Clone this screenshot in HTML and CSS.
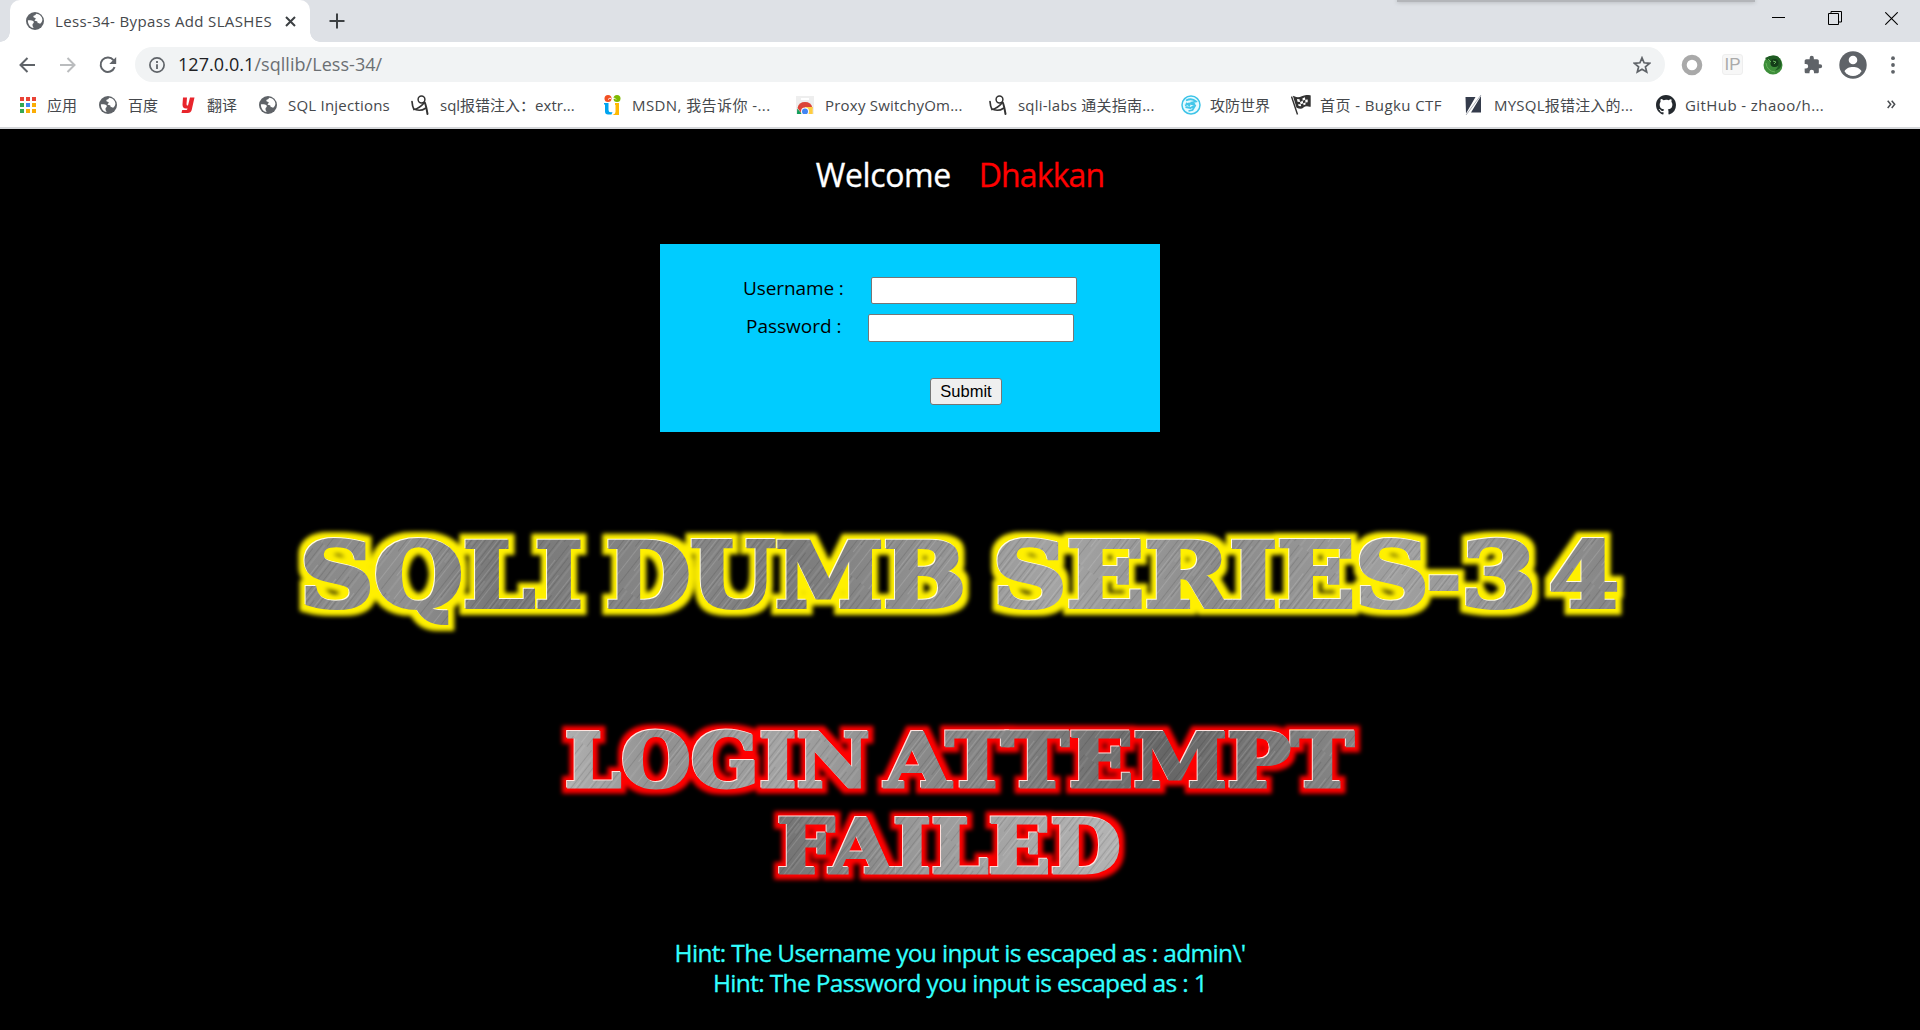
FILE: index.html
```html
<!DOCTYPE html>
<html lang="zh-CN">
<head>
<meta charset="utf-8">
<title>Less-34- Bypass Add SLASHES</title>
<link rel="stylesheet" href="styles.css">
</head>
<body>
<svg class="defs" width="0" height="0" aria-hidden="true">
  <defs>
    <symbol id="globe" viewBox="0 0 18 18">
      <circle cx="9" cy="9" r="9" fill="#5f6368"/>
      <path d="M10 1.800c-.3 1.500-1.300 1.900-2.400 2-.5 1-.2 1.800 1 1.900 1.600.1 1.300 1.500.3 2.100-.8.500-.2 1.300.9 1.200 1.700 0 2.100 1 1.700 2 .9.300 1.900.2 2.600.8 1.300-1 2.300-2.300 2.300-4.200C16.200 4.500 13.400 2 10 1.800zM1.900 8.200c1.600.1 3.800-.1 5.200.9 1 .7.900 1.900 0 2.500-.8.500-.5 1.400-.5 2.400.1.900 1 1.300.9 2.100C4.200 15.300 1.700 12.300 1.900 8.200z" fill="#fff"/>
    </symbol>
    <symbol id="figure" viewBox="0 0 18 20">
      <g fill="none" stroke="#333" stroke-linecap="round"><circle cx="10.500" cy="4.500" r="3.400" stroke-width="1.500"/><path d="M1 6.500c.2 3 .8 6 2 8 3-.7 7-3 10-6.500M5 14.800c3 .8 7 .2 9.500-1.600" stroke-width="1.700"/><path d="M13.800 7.500c1.200 3 2 7 2.700 11.500" stroke-width="2"/></g>
    </symbol>
    <pattern id="brush" width="23" height="150" patternUnits="userSpaceOnUse" patternTransform="rotate(38)">
      <path d="M1 0v90M6.500 30v120M11 0v60M17.500 20v110M21 80v70" stroke="#fff" stroke-opacity=".14"/>
      <path d="M3.500 10v100M8.500 0v70M13.500 50v100M19.500 0v120" stroke="#000" stroke-opacity=".11"/>
    </pattern>
    <linearGradient id="steel" gradientUnits="userSpaceOnUse" x1="0" y1="0" x2="1330" y2="180">
      <stop offset="0" stop-color="#858585"/><stop offset=".1" stop-color="#909090"/><stop offset=".17" stop-color="#777"/><stop offset=".3" stop-color="#888"/><stop offset=".38" stop-color="#7a7a7a"/><stop offset=".46" stop-color="#8c8c8c"/><stop offset=".58" stop-color="#a4a4a4"/><stop offset=".7" stop-color="#8b8b8b"/><stop offset=".83" stop-color="#a0a0a0"/><stop offset="1" stop-color="#858585"/>
    </linearGradient>
    <linearGradient id="steel2" gradientUnits="userSpaceOnUse" x1="0" y1="40" x2="800" y2="0">
      <stop offset="0" stop-color="#b8b8b8"/><stop offset=".15" stop-color="#909090"/><stop offset=".3" stop-color="#a4a4a4"/><stop offset=".46" stop-color="#8a8a8a"/><stop offset=".57" stop-color="#858585"/><stop offset=".78" stop-color="#666"/><stop offset="1" stop-color="#858585"/>
    </linearGradient>
    <linearGradient id="steel3" gradientUnits="userSpaceOnUse" x1="220" y1="0" x2="570" y2="0">
      <stop offset="0" stop-color="#6d6d6d"/><stop offset=".45" stop-color="#999"/><stop offset="1" stop-color="#b2b2b2"/>
    </linearGradient>
    <pattern id="metalSeries" width="1360" height="150" patternUnits="userSpaceOnUse"><rect width="1360" height="150" fill="url(#steel)"/><rect width="1360" height="150" fill="url(#brush)"/></pattern>
    <pattern id="metalLogin" width="840" height="190" patternUnits="userSpaceOnUse"><rect width="840" height="98" fill="url(#steel2)"/><rect y="98" width="840" height="92" fill="url(#steel3)"/><rect width="840" height="190" fill="url(#brush)"/></pattern>
    <filter id="yellowGlow" filterUnits="userSpaceOnUse" x="0" y="0" width="1360" height="150" color-interpolation-filters="sRGB">
      <feMorphology in="SourceAlpha" operator="dilate" radius="6"/><feGaussianBlur stdDeviation="2.200" result="g"/>
      <feFlood flood-color="#fff000"/><feComposite in2="g" operator="in" result="glow"/>
      <feOffset in="SourceAlpha" dx="-1" dy="-1" result="o"/><feFlood flood-color="#fffbe0"/><feComposite in2="o" operator="in" result="edge"/>
      <feMerge><feMergeNode in="glow"/><feMergeNode in="edge"/><feMergeNode in="SourceGraphic"/></feMerge>
    </filter>
    <filter id="redGlow" filterUnits="userSpaceOnUse" x="0" y="0" width="840" height="190" color-interpolation-filters="sRGB">
      <feMorphology in="SourceAlpha" operator="dilate" radius="5"/><feGaussianBlur stdDeviation="2" result="g"/>
      <feFlood flood-color="#ff0000"/><feComposite in2="g" operator="in" result="glow"/>
      <feOffset in="SourceAlpha" dx="-1" dy="-1" result="o"/><feFlood flood-color="#ffe4e0"/><feComposite in2="o" operator="in" result="edge"/>
      <feMerge><feMergeNode in="glow"/><feMergeNode in="edge"/><feMergeNode in="SourceGraphic"/></feMerge>
    </filter>
  </defs>
</svg>

<header class="browser">
  <div class="tabstrip">
    <div class="tab">
      <svg width="18" height="18"><use href="#globe"/></svg>
      <span class="tab-title">Less-34- Bypass Add SLASHES</span>
      <svg width="11" height="11" viewBox="0 0 11 11"><path d="M1 1l9 9M10 1l-9 9" stroke="#3c4043" stroke-width="2"/></svg>
    </div>
    <svg class="new-tab" width="16" height="16" viewBox="0 0 16 16"><path d="M8 .5v15M.5 8h15" stroke="#3c4043" stroke-width="2"/></svg>
    <div class="window-buttons">
      <svg width="13" height="13" viewBox="0 0 13 13"><path d="M0 5.500h13" stroke="#000"/></svg>
      <svg width="14" height="14" viewBox="0 0 14 14"><path d="M.5 2.500h10v11H.5zM3 2.500v-2h10.500v10.500H11" fill="none" stroke="#000"/></svg>
      <svg width="13" height="13" viewBox="0 0 13 13"><path d="M.3.300l12.400 12.400M12.700.3L.3 12.700" stroke="#000" stroke-width="1.100"/></svg>
    </div>
    <div class="behind-window"></div>
  </div>

  <div class="toolbar">
    <svg width="16" height="16" viewBox="0 0 16 16"><path d="M16 8H1.500M8.500 1L1.500 8l7 7" fill="none" stroke="#5f6368" stroke-width="2"/></svg>
    <svg width="16" height="16" viewBox="0 0 16 16"><path d="M0 8h14.500M7.500 1l7 7-7 7" fill="none" stroke="#babcbe" stroke-width="2"/></svg>
    <svg width="18" height="18" viewBox="0 0 18 18"><path d="M15.600 11.200A7.200 7.200 0 1 1 14.500 4.200" fill="none" stroke="#5f6368" stroke-width="2"/><path d="M17.200 1v6.900h-6.900z" fill="#5f6368"/></svg>
    <div class="omnibox">
      <svg width="16" height="16" viewBox="0 0 16 16"><circle cx="8" cy="8" r="7.100" fill="none" stroke="#5f6368" stroke-width="1.700"/><path d="M8 7.200V12M8 4v1.900" stroke="#5f6368" stroke-width="1.800"/></svg>
      <span class="url"><b>127.0.0.1</b>/sqllib/Less-34/</span>
      <svg class="star" width="18" height="18" viewBox="0 0 18 18"><path d="M9 1.800l2.100 5 5.400.5-4.100 3.500 1.300 5.300L9 13.300l-4.700 2.800 1.300-5.300-4.100-3.500 5.400-.5z" fill="none" stroke="#5f6368" stroke-width="1.700"/></svg>
    </div>
    <div class="extensions">
      <svg width="22" height="22" viewBox="0 0 22 22"><circle cx="11" cy="11" r="7.800" fill="none" stroke="#a9a9a9" stroke-width="5"/></svg>
      <div class="ip">IP</div>
      <svg width="20" height="20" viewBox="0 0 20 20"><circle cx="10" cy="10" r="9.500" fill="#3d8e3a"/><path d="M2 3q8-4 13-1.500 5 5 3 10-2 4-6 4 3-2 3-5-2 2-5 1-4-2-1-5-5-1-7-3.500z" fill="#205b23"/><circle cx="11.500" cy="8" r="4" fill="#143c19"/><path d="M3 8q1 8 9 9M10 6l3 1-2 2M5 4l3 3" stroke="#66b35b" fill="none"/></svg>
      <svg width="20" height="20" viewBox="0 0 24 24"><path d="M20.500 11H19V7c0-1.100-.9-2-2-2h-4V3.500a2.500 2.500 0 0 0-5 0V5H4c-1.100 0-2 .9-2 2v3.800h1.500a2.700 2.700 0 0 1 0 5.400H2V20c0 1.100.9 2 2 2h3.800v-1.500a2.700 2.700 0 0 1 5.400 0V22H17c1.100 0 2-.9 2-2v-4h1.500a2.500 2.500 0 0 0 0-5z" fill="#5f6368"/></svg>
      <svg width="28" height="28" viewBox="0 0 28 28"><circle cx="14" cy="14" r="13.700" fill="#5f6368"/><circle cx="14" cy="9" r="4.300" fill="#fff"/><path d="M5.500 20.200C8 14.500 20 14.500 22.500 20.200a10 10 0 0 1-17 0z" fill="#fff"/></svg>
      <svg width="4" height="18" viewBox="0 0 4 18"><g fill="#5f6368"><circle cx="2" cy="2.200" r="1.900"/><circle cx="2" cy="9" r="1.900"/><circle cx="2" cy="15.800" r="1.900"/></g></svg>
    </div>
  </div>

  <nav class="bookmarks">
    <a class="bm"><svg width="18" height="18" viewBox="0 0 18 18"><path d="M1 1h4v4H1zM7 1h4v4H7zM13 1h4v4h-4z" fill="#ea4335"/><path d="M1 7h4v4H1zM1 13h4v4H1z" fill="#34a853"/><path d="M7 7h4v4H7z" fill="#4285f4"/><path d="M13 7h4v4h-4zM7 13h4v4H7zM13 13h4v4h-4z" fill="#fbad05"/></svg><span>应用</span></a>
    <a class="bm"><svg width="18" height="18"><use href="#globe"/></svg><span>百度</span></a>
    <a class="bm translate"><svg width="16" height="18" viewBox="0 0 16 18"><path d="M2 1.500h4L5.500 8q0 2 1.500 1.500L9 1.500h4.500L10.700 14q-.8 3-4 3H.5l.7-3h4q1 0 1.300-1.600Q1.500 13.500 1.500 8.500z" fill="#e8252c"/></svg><span>翻译</span></a>
    <a class="bm"><svg width="18" height="18"><use href="#globe"/></svg><span class="latin">SQL Injections</span></a>
    <a class="bm"><svg width="18" height="20"><use href="#figure"/></svg><span>sql报错注入：extr...</span></a>
    <a class="bm"><svg width="18" height="20" viewBox="0 0 18 20"><circle cx="5" cy="3.500" r="3.500" fill="#f25022"/><circle cx="14" cy="3.500" r="3.500" fill="#7fba00"/><path d="M5 4.500q2-2 3-1M13 4.500q-1-2-3-1" stroke="#fff" fill="none"/><path d="M1 8h4.500v7q0 3 4 2l-1 2.500H5q-3 0-3-3v-7H1z" fill="#00a4ef"/><path d="M12 8h4v12H9.500q3-1 3-3v-7H12z" fill="#ffb900"/></svg><span class="wide">MSDN, 我告诉你 -...</span></a>
    <a class="bm"><svg width="18" height="18" viewBox="0 0 18 18"><path d="M0 0h18v18H0z" fill="#eee"/><path d="M5 2h8v2H5z" fill="#fff"/><path d="M1.500 12a7.700 7.700 0 0 1 15 0L12 18H6z" fill="#db4437"/><path d="M1.200 12.500L6 18H1z" fill="#0f9d58"/><path d="M9 11h7.700v7H9z" fill="#ffcd40"/><circle cx="9" cy="15.500" r="4" fill="#fff"/><circle cx="9" cy="15.500" r="3" fill="#4285f4"/></svg><span class="latin">Proxy SwitchyOm...</span></a>
    <a class="bm"><svg width="18" height="20"><use href="#figure"/></svg><span class="latin">sqli-labs 通关指南...</span></a>
    <a class="bm"><svg width="20" height="20" viewBox="0 0 20 20"><circle cx="10" cy="10" r="9" fill="#e9fbff" stroke="#3ec4e8" stroke-width="1.500"/><path d="M5 5.500q6-3 10 1l-4 1 3 2-6-1-4 2M4.500 12l5 1 5-3-3 5-4 1M5 8l4 3" fill="none" stroke="#43c6e9" stroke-width="1.800"/></svg><span>攻防世界</span></a>
    <a class="bm"><svg width="20" height="20" viewBox="0 0 20 20"><path d="M.5 1.500l6 18M3 2q4 2 8 0t8-1v10q-5-1-7 1t-6 0z" fill="#333" stroke="#333" stroke-width="1.400"/><path d="M6 4l2.500.3L9 7l-2.500-.2zM11.500 3.200l2.500-1 .2 2.500-2.500 1zM9 7l2.700-1.300.5 2.500-2.500 1zM14.200 4.700l2.500-.3v2.800l-2.300.2zM12.200 8.200l2.200-.8.200 2-2 .9zM7 9.200l2.700 0 .5 2-2.500-.3z" fill="#fff"/></svg><span class="wide">首页 - Bugku CTF</span></a>
    <a class="bm"><svg width="18" height="20" viewBox="0 0 18 20"><path d="M.5 2h10L1 18.500zM16 1v16.500H6z" fill="#343b4b"/><path d="M16 0L1 20" stroke="#aaaeb6" stroke-width="1"/></svg><span class="latin">MYSQL报错注入的...</span></a>
    <a class="bm"><svg width="20" height="20" viewBox="0 0 16 16"><path fill="#24292e" fill-rule="evenodd" d="M8 0C3.580 0 0 3.580 0 8c0 3.540 2.290 6.530 5.470 7.590.4.070.55-.17.55-.38 0-.19-.01-.82-.01-1.490-2.010.37-2.530-.49-2.690-.94-.09-.23-.48-.94-.82-1.130-.28-.15-.68-.52-.01-.53.63-.01 1.080.58 1.230.82.72 1.210 1.870.87 2.330.66.070-.52.280-.87.510-1.070-1.780-.2-3.640-.89-3.640-3.950 0-.87.310-1.590.820-2.150-.08-.2-.36-1.020.08-2.120 0 0 .67-.21 2.200.82A7.600 7.600 0 0 1 8 3.870c.68 0 1.360.090 2 .270 1.530-1.040 2.200-.82 2.200-.82.44 1.100.16 1.920.08 2.120.51.560.82 1.270.82 2.150 0 3.070-1.870 3.750-3.650 3.950.29.250.54.730.54 1.480 0 1.070-.01 1.930-.01 2.200 0 .21.150.46.550.38A8.010 8.010 0 0 0 16 8c0-4.420-3.580-8-8-8z"/></svg><span class="wide">GitHub - zhaoo/h...</span></a>
    <svg class="more" width="9" height="9" viewBox="0 0 9 9"><path d="M.7.700l3 3.600-3 3.700M4.700.7l3 3.600-3 3.700" fill="none" stroke="#4a4d51" stroke-width="1.500"/></svg>
  </nav>
</header>

<main class="page">
  <h1 class="welcome"><span class="greeting">Welcome</span><span class="name">Dhakkan</span></h1>
  <form class="login">
    <div class="row user"><label for="uname">Username :</label><input id="uname" type="text"></div>
    <div class="row pass"><label for="passwd">Password :</label><input id="passwd" type="text"></div>
    <button type="button">Submit</button>
  </form>

  <svg class="series" width="1360" height="150" viewBox="0 0 1360 150">
    <g filter="url(#yellowGlow)" class="metal series-text">
      <text x="20" y="97" textLength="283" lengthAdjust="spacingAndGlyphs">SQLI</text>
      <text x="326" y="97" textLength="360" lengthAdjust="spacingAndGlyphs">DUMB</text>
      <text x="713" y="97" textLength="436" lengthAdjust="spacingAndGlyphs">SERIES</text>
      <text x="1147" y="97" textLength="34" lengthAdjust="spacingAndGlyphs">-</text>
      <text x="1181" y="97" textLength="76" lengthAdjust="spacingAndGlyphs">3</text>
      <text x="1269" y="97" textLength="70" lengthAdjust="spacingAndGlyphs">4</text>
    </g>
  </svg>

  <svg class="failed" width="840" height="190" viewBox="0 0 840 190">
    <g filter="url(#redGlow)" class="metal failed-text">
      <text x="25" y="76.500" textLength="305" lengthAdjust="spacingAndGlyphs">LOGIN</text>
      <text x="345" y="76.500" textLength="469" lengthAdjust="spacingAndGlyphs">ATTEMPT</text>
      <text x="237" y="162.500" textLength="344" lengthAdjust="spacingAndGlyphs">FAILED</text>
    </g>
  </svg>

  <p class="hints">Hint: The Username you input is escaped as : admin\'<br>Hint: The Password you input is escaped as : 1</p>
</main>
</body>
</html>
```
FILE: styles.css
```css
* { box-sizing: border-box; }
body {
  margin: 0;
  width: 1920px;
  height: 1030px;
  overflow: hidden;
  background: #000;
  font-family: "Open Sans", "Noto Sans CJK SC", sans-serif;
}
svg { display: block; flex: none; }
.defs { position: absolute; }

/* browser frame */
.browser { height: 129px; background: #fff; border-bottom: 2px solid #d5d7da; }
.tabstrip {
  position: relative;
  height: 42px;
  display: flex;
  align-items: center;
  padding-left: 10px;
  background: #dee1e6;
}
.tab {
  position: relative;
  width: 300px;
  height: 42px;
  display: flex;
  align-items: center;
  padding-left: 16px;
  background: #fff;
  border-radius: 10px 10px 0 0;
}
.tab::before, .tab::after {
  content: "";
  position: absolute;
  bottom: 0;
  width: 10px;
  height: 10px;
}
.tab::before { left: -10px; background: radial-gradient(circle at 0 0, #dee1e6 9.5px, #fff 10px); }
.tab::after { right: -10px; background: radial-gradient(circle at 100% 0, #dee1e6 9.5px, #fff 10px); }
.tab-title {
  width: 218px;
  margin: 0 12px 0 11px;
  font-size: 15px;
  letter-spacing: .36px;
  color: #45484c;
  white-space: nowrap;
}
.new-tab { margin-left: 19px; }
.window-buttons { display: flex; align-items: center; gap: 43px; margin: -6px 22px 0 auto; }
.behind-window {
  position: absolute;
  left: 1397px;
  top: 0;
  width: 358px;
  height: 2px;
  background: #b3b5b9;
  box-shadow: 0 0 4px #9b9da1;
}

.toolbar { height: 45px; display: flex; align-items: center; padding-left: 19px; }
.toolbar > svg + svg { margin-left: 25px; }
.toolbar > svg:nth-child(2) { margin-right: -2px; }
.omnibox {
  width: 1530px;
  height: 35px;
  margin-left: 18px;
  padding: 0 14px;
  display: flex;
  align-items: center;
  border-radius: 18px;
  background: #f1f3f4;
}
.url { margin: -2px 0 0 13px; font-size: 18px; letter-spacing: .05px; color: #6b6f73; }
.url b { font-weight: 400; color: #202124; }
.star { margin-left: auto; }
.extensions { display: flex; align-items: center; margin-left: 16px; }
.ip {
  width: 21px;
  height: 21px;
  margin: 0 20px 0 19px;
  border: 1px solid #eee;
  border-radius: 3px;
  background: #f7f7f7;
  color: #aaa;
  font: 17px/19px "Liberation Sans", sans-serif;
  text-align: center;
}
.extensions svg:nth-child(4) { margin: 0 16px 0 20px; }
.extensions svg:nth-child(6) { margin-left: 24px; }

.bookmarks {
  height: 36px;
  display: grid;
  grid-template-columns: 80px 82px 78px 152px 192px 193px 193px 192px 110px 174px 191px 231px 12px;
  align-items: center;
  padding-left: 19px;
}
.bm {
  display: grid;
  grid-template-columns: 18px auto;
  gap: 11px;
  justify-content: start;
  align-items: center;
  height: 36px;
  font-size: 15px;
  line-height: 22px;
  color: #45484c;
  white-space: nowrap;
}
.bm:first-child { gap: 10px; }
.bm.translate { grid-template-columns: 16px auto; gap: 10px; }
.bm .latin { letter-spacing: .22px; }
.bm .wide { letter-spacing: .42px; }
.more { margin-top: -2px; }

/* page content */
.page { height: 901px; text-align: center; }
.welcome {
  height: 115px;
  margin: 0;
  padding-top: 22px;
  display: flex;
  justify-content: center;
  gap: 28px;
  font-size: 32px;
  line-height: 48px;
  font-weight: 400;
  letter-spacing: -.9px;
  color: #fff;
  -webkit-text-stroke: .3px;
}
.greeting { letter-spacing: -.4px; }
.welcome .name { color: #f00; }
.login {
  width: 500px;
  height: 188px;
  margin-left: 660px;
  padding-top: 33px;
  background: #0cf;
  color: #000;
  font-size: 19px;
}
.row { display: flex; height: 27px; }
.row label { line-height: 24px; white-space: nowrap; text-align: left; }
.user { padding-left: 83px; }
.user label { width: 128px; line-height: 22px; letter-spacing: -.1px; }
.pass { padding-left: 86px; margin-top: 10px; }
.pass label { width: 122px; }
.row input {
  width: 206px;
  height: 27px;
  padding: 0;
  border: 1px solid #767676;
  border-radius: 2px;
  background: #fff;
}
.pass input { height: 28px; }
.login button {
  display: block;
  width: 72px;
  height: 27px;
  margin: 37px 0 0 270px;
  padding: 0;
  border: 1px solid #767676;
  border-radius: 3px;
  background: #efefef;
  color: #000;
  font: 16.5px "Liberation Sans", Arial, sans-serif;
}

.series { margin: 78px 0 0 280px; }
.failed { margin: 50px 0 0 540px; }
.metal { font-family: "DejaVu Serif", serif; font-weight: 700; stroke-linejoin: miter; stroke-miterlimit: 2; }
.series-text { font-size: 90px; fill: url(#metalSeries); stroke: url(#metalSeries); stroke-width: 4px; }
.failed-text { font-size: 75px; fill: url(#metalLogin); stroke: url(#metalLogin); stroke-width: 3px; }

.hints {
  margin: 38px 0 0;
  font-size: 24.5px;
  line-height: 30px;
  letter-spacing: -.66px;
  color: #3ff;
  -webkit-text-stroke: .3px;
}
```
